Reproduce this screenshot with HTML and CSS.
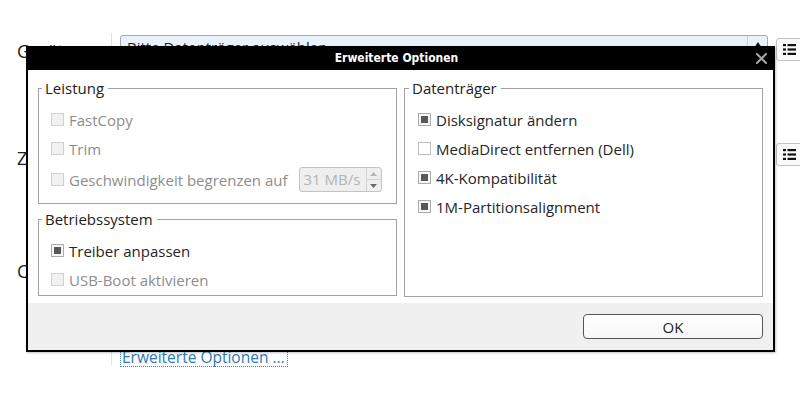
FILE: index.html
```html
<!DOCTYPE html>
<html lang="de">
<head>
<meta charset="utf-8">
<title>Erweiterte Optionen</title>
<link rel="stylesheet" href="styles.css">
</head>
<body>
<div class="page">
  <div class="labels">
    <div class="lbl l1">Gerät</div>
    <div class="lbl l2">Z</div>
    <div class="lbl l3">C</div>
  </div>
  <div class="controls">
    <div class="combo">
      <span class="combo-text">Bitte Datenträger auswählen</span>
      <span class="combo-btn"><svg width="8" height="6" viewBox="0 0 8 6"><path d="M0 6 L4 0 L8 6 Z" fill="#111"/></svg></span>
    </div>
    <a class="adv-link" href="#">Erweiterte Optionen ...</a>
  </div>
  <div class="side">
    <button class="icon-btn b1" type="button"><svg width="13" height="11" viewBox="0 0 13 11"><g fill="#111"><rect x="0" y="0" width="3" height="2.2"/><rect x="4.5" y="0" width="8.5" height="2.2"/><rect x="0" y="4.4" width="3" height="2.2"/><rect x="4.5" y="4.4" width="8.5" height="2.2"/><rect x="0" y="8.8" width="3" height="2.2"/><rect x="4.5" y="8.8" width="8.5" height="2.2"/></g></svg></button>
    <button class="icon-btn b2" type="button"><svg width="13" height="11" viewBox="0 0 13 11"><g fill="#111"><rect x="0" y="0" width="3" height="2.2"/><rect x="4.5" y="0" width="8.5" height="2.2"/><rect x="0" y="4.4" width="3" height="2.2"/><rect x="4.5" y="4.4" width="8.5" height="2.2"/><rect x="0" y="8.8" width="3" height="2.2"/><rect x="4.5" y="8.8" width="8.5" height="2.2"/></g></svg></button>
  </div>

  <div class="dialog">
    <div class="titlebar">
      <span class="title-spacer"></span>
      <span class="title">Erweiterte Optionen</span>
      <span class="close"><svg width="11" height="11" viewBox="0 0 11 11"><path d="M1 1 L10 10 M10 1 L1 10" stroke="#a6a6a6" stroke-width="2" stroke-linecap="square"/></svg></span>
    </div>
    <div class="dlg-body">
      <div class="col-left">
        <fieldset class="group g-perf">
          <legend>Leistung</legend>
          <div class="opt disabled"><span class="cb"></span><span>FastCopy</span></div>
          <div class="opt disabled"><span class="cb"></span><span>Trim</span></div>
          <div class="opt disabled spin-row"><span class="cb"></span><span class="spin-label">Geschwindigkeit begrenzen auf</span>
            <span class="spin"><span class="spin-val">31 MB/s</span><span class="spin-btns"><span class="sb up"><svg width="7" height="4" viewBox="0 0 7 4"><path d="M0 4 L3.5 0 L7 4 Z" fill="#b5b5b5"/></svg></span><span class="sb down"><svg width="7" height="4" viewBox="0 0 7 4"><path d="M0 0 L3.5 4 L7 0 Z" fill="#6a6a6a"/></svg></span></span></span>
          </div>
        </fieldset>
        <fieldset class="group g-os">
          <legend>Betriebssystem</legend>
          <div class="opt"><span class="cb checked"></span><span>Treiber anpassen</span></div>
          <div class="opt disabled"><span class="cb"></span><span>USB-Boot aktivieren</span></div>
        </fieldset>
      </div>
      <fieldset class="group g-disk">
        <legend>Datenträger</legend>
        <div class="opt"><span class="cb checked"></span><span>Disksignatur ändern</span></div>
        <div class="opt"><span class="cb"></span><span>MediaDirect entfernen (Dell)</span></div>
        <div class="opt"><span class="cb checked"></span><span>4K-Kompatibilität</span></div>
        <div class="opt"><span class="cb checked"></span><span>1M-Partitionsalignment</span></div>
      </fieldset>
    </div>
    <div class="footer">
      <button class="ok" type="button">OK</button>
    </div>
  </div>
</div>
</body>
</html>
```

FILE: styles.css
```css
* { box-sizing: border-box; }
html, body { margin: 0; padding: 0; background: #fff; }
body { font-family: "Open Sans", "Noto Sans", "DejaVu Sans", sans-serif; color: #222; }

.page {
  position: relative;
  width: 800px;
  height: 403px;
  overflow: hidden;
  display: grid;
  grid-template-columns: 112px 656px 32px;
  align-items: start;
  padding-top: 33px;
}

/* background window */
.labels {
  height: 332px;
  border-right: 1px solid #e2e2e2;
  padding-left: 17px;
  display: flex;
  flex-direction: column;
  align-items: flex-start;
}
.lbl { font-size: 18px; line-height: 18px; color: #1e1e1e; white-space: nowrap; }
.l1 { margin-top: 9px; }
.l2 { margin-top: 89px; }
.l3 { margin-top: 95px; }

.controls { padding-left: 8px; display: flex; flex-direction: column; align-items: flex-start; }
.combo {
  margin-top: 2px;
  width: 648px;
  height: 24px;
  border: 1px solid #a9a9a9;
  border-radius: 3px;
  background: #e9f2fb;
  display: flex;
  align-items: center;
}
.combo-text { flex: 1; padding-left: 6px; font-size: 15px; line-height: 22px; color: #222; }
.combo-btn {
  width: 20px; height: 22px;
  border-left: 1px solid #cfcfcf;
  display: flex; align-items: flex-start; justify-content: center;
  padding-top: 6px;
}
.adv-link {
  margin-top: 288px;
  font-size: 15.5px;
  line-height: 18px;
  color: #2a7ab8;
  text-decoration: none;
  border: 1px dotted #4a7fae;
  padding: 0 2px 0 1px;
}

.side { padding-left: 8px; display: flex; flex-direction: column; }
.icon-btn {
  width: 30px; height: 23px;
  border: 1px solid #c3c3c3;
  border-radius: 3px;
  background: #fafafa;
  padding: 0 0 0 6px;
  display: flex; align-items: center; justify-content: flex-start;
}
.b1 { margin-top: 5px; }
.b2 { margin-top: 82px; }

/* dialog overlay */
.dialog {
  position: absolute;
  left: 26px;
  top: 46px;
  width: 749px;
  height: 306px;
  border: 2px solid #000;
  border-top: 0;
  background: #fff;
  display: flex;
  flex-direction: column;
  box-shadow: 1px 1px 2px rgba(0,0,0,0.25);
}
.titlebar {
  height: 24px;
  background: #000;
  display: grid;
  grid-template-columns: 1fr auto 1fr;
  align-items: center;
}
.title {
  color: #fff;
  font-family: "DejaVu Sans Condensed", "DejaVu Sans", sans-serif;
  font-weight: bold;
  font-size: 12px;
  line-height: 24px;
  padding-right: 8px;
}
.close { justify-self: end; margin-right: 6px; display: flex; }

.dlg-body {
  height: 233px;
  padding: 10px 10px 6px 10px;
  display: flex;
  gap: 7px;
  background: #fff;
}
.col-left { width: 359px; display: flex; flex-direction: column; gap: 7px; }

.group {
  margin: 0;
  min-width: 0;
  border: 1px solid #a2a2a2;
  padding: 9px 12px 9px 12px;
}
.group legend {
  font-size: 15px;
  line-height: 16px;
  color: #222;
  padding: 0 4px 0 3px;
  margin-left: -9px;
}
.g-os { padding-top: 9px; padding-bottom: 1px; }
.g-disk { width: 359px; padding-left: 13px; padding-top: 9px; }

.opt {
  height: 29px;
  display: flex;
  align-items: center;
  gap: 5px;
  font-size: 15px;
  color: #262626;
  white-space: nowrap;
}
.opt.disabled { color: #8d8d8d; }
.spin-row { margin-top: 2px; }

.cb {
  width: 13px; height: 13px;
  flex: none;
  border: 1px solid #bcbcbc;
  background: #fff;
  display: flex; align-items: center; justify-content: center;
}
.opt.disabled .cb { border-color: #d0d0d0; background: #f1f1f1; }
.cb.checked { border-color: #acacac; background: #f6f6f6; }
.cb.checked::after { content: ""; width: 7px; height: 7px; background: #595959; }

.spin {
  margin-left: 6px;
  width: 83px; height: 25px;
  border: 1px solid #c4c4c4;
  border-radius: 3px;
  background: #efefef;
  display: flex;
}
.spin-val { flex: 1; padding-left: 4px; line-height: 23px; color: #b3b3b3; font-size: 15px; }
.spin-btns { width: 15px; border-left: 1px solid #d2d2d2; display: flex; flex-direction: column; }
.sb { flex: 1; display: flex; align-items: center; justify-content: center; }
.sb.up { border-bottom: 1px solid #d2d2d2; }

.footer {
  flex: 1;
  background: #f0f0f0;
  display: flex;
  justify-content: flex-end;
  align-items: flex-start;
  padding: 11px 10px 0 0;
}
.ok {
  width: 180px; height: 25px;
  border: 1px solid #555;
  border-radius: 4px;
  background: linear-gradient(#ffffff, #f7f7f7);
  font-family: "Open Sans", "Noto Sans", sans-serif;
  font-size: 15px;
  color: #222;
  padding: 0;
}
```
